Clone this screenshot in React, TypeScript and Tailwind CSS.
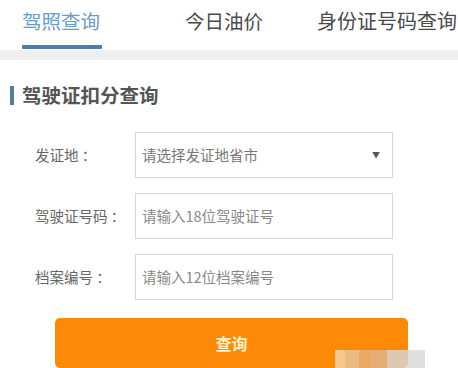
import React from "react";

const font = { fontFamily: '"Noto Sans CJK SC", "Noto Sans", sans-serif' };

function Row({ label, children }: { label: string; children: React.ReactNode }) {
  return (
    <div className="flex items-center h-[46px]">
      <div className="w-[135px] shrink-0 pl-[35px] text-[14.5px] text-[#666] whitespace-nowrap">{label}</div>
      <div className="w-[258px] shrink-0 h-[46px] border border-[#d6d6d6] flex items-center px-[6px] text-[14.5px] text-[#777] whitespace-nowrap">
        {children}
      </div>
    </div>
  );
}

export default function App() {
  return (
    <div className="w-[458px] h-[368px] bg-white overflow-hidden relative" style={font}>
      <div className="flex items-start h-[50px] whitespace-nowrap">
        <div className="ml-[22px] flex flex-col shrink-0">
          <div className="text-[19.5px] leading-[24px] mt-[9px] text-[#6b9ac4]">驾照查询</div>
          <div className="mt-[12px] h-[4px] w-[80px] bg-[#4f7ea6] rounded-[1px]"></div>
        </div>
        <div className="ml-[83px] shrink-0 text-[19.5px] leading-[24px] mt-[9px] text-[#4a4a4a]">今日油价</div>
        <div className="ml-[54px] shrink-0 text-[20px] leading-[24px] mt-[9px] text-[#4a4a4a]">身份证号码查询</div>
      </div>
      <div className="h-[10px] bg-[#efefef]"></div>
      <div className="flex items-center mt-[25px] h-[20px]">
        <div className="ml-[10px] w-[4px] h-[19px] bg-[#4f7ea6]"></div>
        <div className="ml-[8px] text-[19.5px] font-bold text-[#555] leading-[24px]">驾驶证扣分查询</div>
      </div>
      <div className="mt-[27px] flex flex-col gap-[15px]">
        <Row label="发证地 ：">
          <span className="flex-1">请选择发证地省市</span>
          <span className="text-[8px] text-[#555] mr-[6px]">▼</span>
        </Row>
        <Row label="驾驶证号码 ：">
          <span className="text-[#888]">请输入18位驾驶证号</span>
        </Row>
        <Row label="档案编号 ：">
          <span className="text-[#888]">请输入12位档案编号</span>
        </Row>
      </div>
      <div className="mt-[18px] ml-[55px] w-[353px] h-[50px] rounded-[5px] bg-[#fd8a06] flex items-center justify-center text-[16px] font-bold text-[#fff3c8]">
        查询
      </div>
      <div className="absolute left-[335px] top-[350px] flex h-[18px] opacity-80">
        <div className="w-[10px] bg-[#f3d8b0]"></div>
        <div className="w-[14px] bg-[#e8c8a0]"></div>
        <div className="w-[12px] bg-[#e6b27a]"></div>
        <div className="w-[16px] bg-[#e0b890]"></div>
        <div className="w-[38px] bg-[#d8d8dc]"></div>
      </div>
    </div>
  );
}
